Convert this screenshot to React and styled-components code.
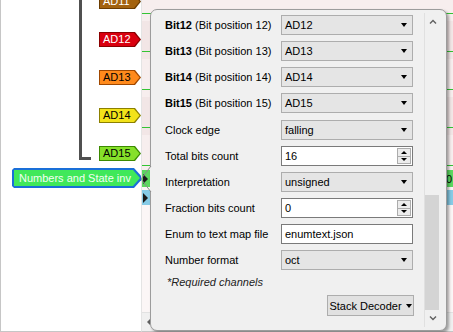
import React from 'react'
import styled, { createGlobalStyle } from 'styled-components'

const GlobalStyle = createGlobalStyle`
  html, body {
    margin: 0;
    padding: 0;
    background: #fff;
  }
  body {
    font-family: "Liberation Sans", Arial, sans-serif;
    font-size: 11px;
    color: #000;
  }
`

const Screen = styled.div`
  position: relative;
  width: 453px;
  height: 332px;
  display: flex;
  overflow: hidden;
  background: #fff;
`

// left column with the signal names
const NamePanel = styled.div`
  width: 141px;
  height: 332px;
  box-sizing: border-box;
  border-left: 1px solid #c6c6c6;
  border-bottom: 1px solid #c6c6c6;
  overflow: hidden;
  display: flex;
  flex-direction: column;
`
const Group = styled.div`
  display: flex;
  margin-top: -6px;
`
const Bracket = styled.div`
  width: 12px;
  box-sizing: border-box;
  margin-left: 78px;
  margin-top: -20px;
  margin-bottom: 1px;
  border-left: 3px solid #505050;
  border-bottom: 3px solid #505050;
`
const TagColumn = styled.div`
  display: flex;
  flex-direction: column;
  gap: 23px;
  margin-left: 8px;
`
const TagEdge = styled.div`
  width: 42px;
  height: 15px;
  box-sizing: border-box;
  padding: 1px 1.5px 1px 1px;
  background: ${p => p.$edge};
  clip-path: polygon(0 0, calc(100% - 6px) 0, 100% 50%, calc(100% - 6px) 100%, 0 100%);
  display: flex;
`
const TagFill = styled.div`
  flex: 1;
  background: ${p => p.$fill};
  color: ${p => p.$text};
  clip-path: polygon(0 0, calc(100% - 5.5px) 0, 100% 50%, calc(100% - 5.5px) 100%, 0 100%);
  font-size: 11px;
  line-height: 13px;
  padding-left: 3px;
  white-space: nowrap;
`
const BusEdge = styled.div`
  width: 131px;
  height: 20px;
  box-sizing: border-box;
  margin: 7px 0 0 11px;
  padding: 2px 3px 2px 2px;
  background: #1a6fd8;
  clip-path: polygon(0 2px, 2px 0, calc(100% - 9px) 0, 100% 50%, calc(100% - 9px) 100%, 2px 100%, 0 calc(100% - 2px));
  display: flex;
`
const BusFill = styled.div`
  flex: 1;
  background: #40e85a;
  color: #f4fff4;
  clip-path: polygon(0 0, calc(100% - 7px) 0, 100% 50%, calc(100% - 7px) 100%, 0 100%);
  font-size: 11px;
  line-height: 16px;
  padding-left: 5px;
  white-space: nowrap;
`

// waveform area, mostly hidden behind the popup
const WavePanel = styled.div`
  flex: 1;
  height: 332px;
  box-sizing: border-box;
  border-left: 1px solid #e4e4e4;
  border-bottom: 1px solid #c6c6c6;
  background: #fbf6f6;
  display: flex;
  flex-direction: column;
  overflow: hidden;
`
const Traces = styled.div`
  flex: 1;
  display: flex;
  flex-direction: column;
  margin-top: -17px;
`
const TraceRow = styled.div`
  height: 38px;
  flex: none;
  background: ${p => (p.$odd ? '#f2e6e6' : '#f7eeee')};
`
const Level = styled.div`
  height: 1px;
  margin-top: 30px;
  background: #34c434;
`
const BusRow = styled.div`
  height: 17px;
  flex: none;
  margin-top: -3px;
  background: ${p => p.$color};
  display: flex;
  align-items: center;
  justify-content: space-between;
  font-size: 11px;
`
const BusMark = styled.span`
  width: 0;
  height: 0;
  margin-left: 1px;
  border-left: 5px solid #1a1a1a;
  border-top: 5px solid transparent;
  border-bottom: 5px solid transparent;
`
const BusValue = styled.span`
  margin-right: 1px;
  color: #000;
`
const StateRow = styled(BusRow)`
  height: 15px;
  margin-top: 3px;
`
const HScroll = styled.div`
  height: 18px;
  flex: none;
  background: #f0f0f0;
  border-top: 1px solid #e2e2e2;
  display: flex;
  align-items: center;
  padding-left: 5px;
`
const LeftArrow = styled.span`
  width: 0;
  height: 0;
  border-right: 3px solid #606060;
  border-top: 3px solid transparent;
  border-bottom: 3px solid transparent;
`

// decoder settings popup
const Popup = styled.div`
  position: absolute;
  left: 150px;
  top: 9px;
  width: 297px;
  height: 322px;
  box-sizing: border-box;
  background: #f0f0f0;
  border: 1px solid #9c9c9c;
  border-radius: 7px;
  box-shadow: 2px 2px 3px rgba(0, 0, 0, 0.35);
  display: flex;
`
const Pointer = styled.svg`
  position: absolute;
  left: -11px;
  top: 156px;
`
const Content = styled.div`
  flex: 1;
  padding: 5px 10px 0 14px;
  display: flex;
  flex-direction: column;
`
const Form = styled.div`
  display: grid;
  grid-template-columns: 116px 132px;
  grid-auto-rows: 20px;
  row-gap: 6px;
  align-items: center;
  & + & {
    margin-top: 7px;
  }
`
const Label = styled.span`
  white-space: nowrap;
  color: #000;
  b {
    font-weight: bold;
  }
`
const Combo = styled.div`
  height: 20px;
  box-sizing: border-box;
  border: 1px solid #adadad;
  background: #e5e5e5;
  display: flex;
  align-items: center;
  justify-content: space-between;
  padding: 0 5px 0 3px;
`
const Caret = styled.span`
  width: 0;
  height: 0;
  border-top: 4px solid #000;
  border-left: 3.5px solid transparent;
  border-right: 3.5px solid transparent;
`
const Field = styled.div`
  height: 20px;
  box-sizing: border-box;
  border: 1px solid #7a7a7a;
  background: #fff;
  display: flex;
  align-items: center;
  justify-content: space-between;
  padding: 0 1px 0 3px;
`
const Spin = styled.div`
  width: 14px;
  height: 16px;
  box-sizing: border-box;
  border: 1px solid #acacac;
  background: #ececec;
  display: flex;
  flex-direction: column;
`
const SpinHalf = styled.div`
  flex: 1;
  display: flex;
  align-items: center;
  justify-content: center;
  & + & {
    border-top: 1px solid #acacac;
  }
  &::after {
    content: '';
    width: 0;
    height: 0;
    border-left: 3px solid transparent;
    border-right: 3px solid transparent;
    ${p => (p.$up ? 'border-bottom: 3px solid #000;' : 'border-top: 3px solid #000;')}
  }
`
const Note = styled.div`
  margin-top: 5px;
  padding-left: 2px;
  line-height: 14px;
  font-style: italic;
  color: #222;
`
const ButtonRow = styled.div`
  display: flex;
  justify-content: flex-end;
  margin-top: 6px;
`
const Button = styled.div`
  width: 87px;
  height: 21px;
  box-sizing: border-box;
  border: 1px solid #adadad;
  background: #e1e1e1;
  display: flex;
  align-items: center;
  justify-content: center;
  gap: 4px;
`
const Scrollbar = styled.div`
  width: 17px;
  margin: 3px 5px 3px 0;
  box-sizing: border-box;
  border-left: 1px solid #e0e0e0;
  display: flex;
  flex-direction: column;
`
const ScrollButton = styled.div`
  height: 17px;
  flex: none;
  display: flex;
  align-items: center;
  justify-content: center;
`
const Track = styled.div`
  flex: 1;
  display: flex;
  flex-direction: column;
  justify-content: flex-end;
`
const Thumb = styled.div`
  height: 115px;
  margin-right: 2px;
  background: #d4d4d4;
`

const signals = [
  { name: 'AD11', fill: '#a3620e', edge: '#6b3c00', text: '#fff' },
  { name: 'AD12', fill: '#d9000f', edge: '#8a0000', text: '#fff' },
  { name: 'AD13', fill: '#ff8a1c', edge: '#a04800', text: '#000' },
  { name: 'AD14', fill: '#f2e21a', edge: '#8c8000', text: '#000' },
  { name: 'AD15', fill: '#86e02a', edge: '#3c8a00', text: '#000' }
]

const bits = [12, 13, 14, 15]

const settings = [
  { label: 'Clock edge', kind: 'combo', value: 'falling' },
  { label: 'Total bits count', kind: 'spin', value: '16' },
  { label: 'Interpretation', kind: 'combo', value: 'unsigned' },
  { label: 'Fraction bits count', kind: 'spin', value: '0' },
  { label: 'Enum to text map file', kind: 'text', value: 'enumtext.json' },
  { label: 'Number format', kind: 'combo', value: 'oct' }
]

const Chevron = ({ up }) => (
  <svg width="8" height="5" viewBox="0 0 8 5">
    <polyline
      points={up ? '1,4.5 4,1.5 7,4.5' : '1,0.5 4,3.5 7,0.5'}
      fill="none"
      stroke="#606060"
      strokeWidth="1.4"
    />
  </svg>
)

const Control = ({ kind, value }) => {
  if (kind === 'combo') {
    return (
      <Combo>
        {value}
        <Caret />
      </Combo>
    )
  }
  return (
    <Field>
      {value}
      {kind === 'spin' && (
        <Spin>
          <SpinHalf $up />
          <SpinHalf />
        </Spin>
      )}
    </Field>
  )
}

export default function App() {
  return (
    <Screen>
      <GlobalStyle />
      <NamePanel>
        <Group>
          <Bracket />
          <TagColumn>
            {signals.map(s => (
              <TagEdge key={s.name} $edge={s.edge}>
                <TagFill $fill={s.fill} $text={s.text}>
                  {s.name}
                </TagFill>
              </TagEdge>
            ))}
          </TagColumn>
        </Group>
        <BusEdge>
          <BusFill>Numbers and State inv</BusFill>
        </BusEdge>
      </NamePanel>

      <WavePanel>
        <Traces>
          {signals.map((s, i) => (
            <TraceRow key={s.name} $odd={i % 2 === 1}>
              <Level />
            </TraceRow>
          ))}
          <BusRow $color="#5cd860">
            <BusMark />
            <BusValue>0</BusValue>
          </BusRow>
          <StateRow $color="#86cbe6">
            <BusMark />
          </StateRow>
        </Traces>
        <HScroll>
          <LeftArrow />
        </HScroll>
      </WavePanel>

      <Popup>
        <Pointer width="12" height="26" viewBox="0 0 12 26">
          <rect x="10" y="1" width="2" height="24" fill="#f0f0f0" />
          <polyline points="11,0 1,13 11,26" fill="none" stroke="#8c8c8c" strokeWidth="1" />
        </Pointer>
        <Content>
          <Form>
            {bits.map(n => (
              <React.Fragment key={n}>
                <Label>
                  <b>Bit{n}</b> (Bit position {n})
                </Label>
                <Control kind="combo" value={`AD${n}`} />
              </React.Fragment>
            ))}
          </Form>
          <Form>
            {settings.map(s => (
              <React.Fragment key={s.label}>
                <Label>{s.label}</Label>
                <Control kind={s.kind} value={s.value} />
              </React.Fragment>
            ))}
          </Form>
          <Note>*Required channels</Note>
          <ButtonRow>
            <Button>
              Stack Decoder
              <Caret />
            </Button>
          </ButtonRow>
        </Content>
        <Scrollbar>
          <ScrollButton>
            <Chevron up />
          </ScrollButton>
          <Track>
            <Thumb />
          </Track>
          <ScrollButton>
            <Chevron />
          </ScrollButton>
        </Scrollbar>
      </Popup>
    </Screen>
  )
}
